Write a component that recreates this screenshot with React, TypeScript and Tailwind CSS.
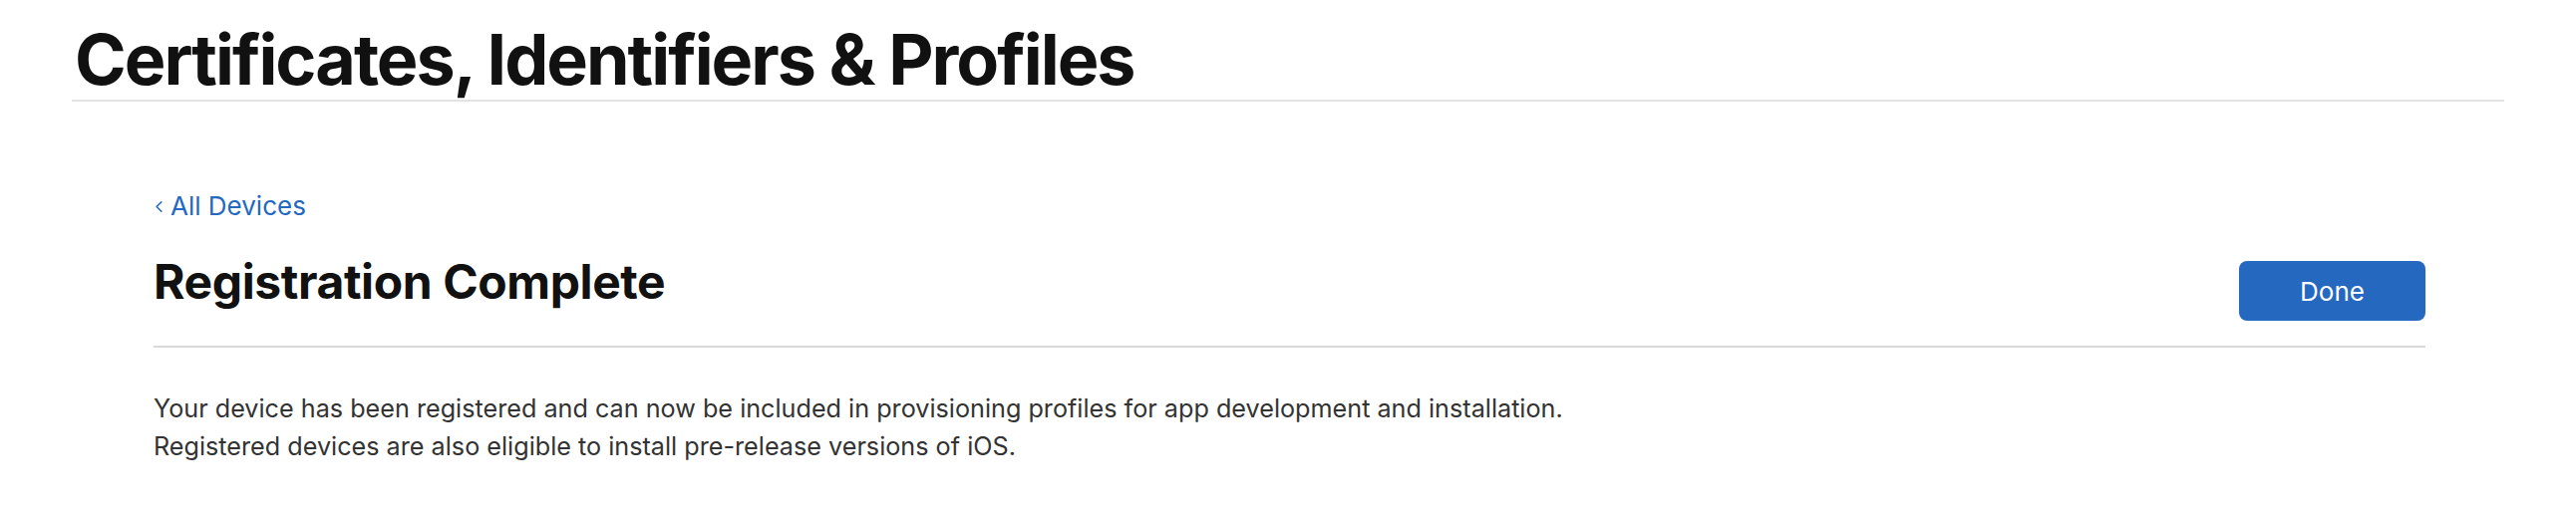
import { ChevronLeft } from "lucide-react";

export default function App() {
  return (
    <div className="min-h-[512px] w-full bg-white font-['Inter',sans-serif] text-[#1d1d1f]">
      {/* page header */}
      <header className="mx-[72px] border-b-2 border-[#e3e3e3] pt-[20px]">
        <h1 className="pl-[3px] text-[70px] leading-[80px] font-bold tracking-[-2px] text-[#111111]">
          Certificates, Identifiers &amp; Profiles
        </h1>
      </header>

      <main className="ml-[154px] mr-[151px] pt-[87px]">
        <a href="#" className="flex items-center text-[26px] leading-[36px] text-[#2468c0]">
          <ChevronLeft className="-ml-[4px] mr-[2px] h-[19px] w-[19px]" strokeWidth={2} />
          <span>All Devices</span>
        </a>

        <div className="mt-[30px] flex items-start justify-between border-b-2 border-[#d9d9d9] pb-[25px]">
          <h2 className="text-[48px] leading-[56px] font-bold tracking-[-0.4px] text-[#111111]">Registration Complete</h2>
          <button className="mt-[7px] h-[60px] w-[187px] rounded-[8px] bg-[#2468c0] text-[26px] text-white">Done</button>
        </div>

        <div className="pt-[42px] text-[25.2px] leading-[38px] text-[#333333]">
          <p>Your device has been registered and can now be included in provisioning profiles for app development and installation.</p>
          <p>Registered devices are also eligible to install pre-release versions of iOS.</p>
        </div>
      </main>
    </div>
  );
}
